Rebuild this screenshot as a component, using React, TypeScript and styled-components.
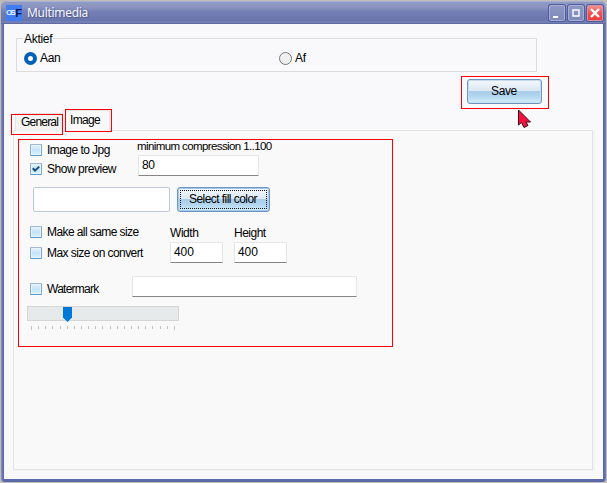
import React from "react";
import styled, { createGlobalStyle } from "styled-components";

const Global = createGlobalStyle`
  * { box-sizing: border-box; }
  body { margin: 0; background: #bdbcb9; overflow: hidden; }
`;

const Frame = styled.div`
  position: relative;
  display: flex;
  flex-direction: column;
  width: 605px;
  height: 481px;
  margin: 1px 0 0 1px;
  padding: 0 3px 3px;
  border-radius: 6px 6px 4px 4px;
  background: linear-gradient(90deg, #8c98c8 0, #5c69a8 2px, #5c69a8 603px, #7783b5 605px);
  font: 12px/14px "Liberation Sans", Arial, sans-serif;
  color: #000;
`;

const TitleBar = styled.header`
  display: flex;
  align-items: center;
  flex: none;
  height: 23px;
  margin: 0 -3px;
  padding: 0 3px 0 5px;
  border-radius: 6px 6px 0 0;
  border-top: 1px solid #a9b1d2;
  background: linear-gradient(#8f99c5 0, #8b95c1 5px, #737fb4 10px, #6975ad 19px, #7d88b8 20px, #5661a0 22px);
`;

const Title = styled.h1`
  flex: 1;
  margin: -1px 0 0 5px;
  font: 12px/16px "Noto Sans", sans-serif;
  letter-spacing: -0.3px;
  color: #f6f7fb;
  text-shadow: 1px 1px 1px #4b5689;
`;

const CaptionButton = styled.span<{ $close?: boolean }>`
  display: grid;
  place-items: center;
  width: 16px;
  height: 16px;
  margin-left: 3px;
  border-radius: 2px;
  border: 1px solid ${(p) => (p.$close ? "#d98f9f" : "#a5aed4")};
  box-shadow: 0 0 0 1px #505c9b;
  background: ${(p) => (p.$close ? "linear-gradient(#f09090, #f25050 50%, #ee3a3a)" : "linear-gradient(#8c97c4, #7f8aba)")};
`;

const Client = styled.main`
  flex: 1;
  min-height: 0;
  padding: 10px 0 0 7px;
  background: #f9f9fc;
`;

const Text = styled.span<{ $spacing?: number }>`
  display: inline-block;
  white-space: nowrap;
  letter-spacing: ${(p) => p.$spacing ?? -0.3}px;
`;

const Group = styled.fieldset`
  display: flex;
  width: 521px;
  height: 38px;
  margin: 0 0 0 5px;
  padding: 8px 0 0 7px;
  border: 1px solid #dcdcdf;
`;

const Legend = styled.legend`
  height: 9px;
  margin-left: -1px;
  padding: 0 1px;
  line-height: 9px;
`;

const LegendText = styled(Text)`
  line-height: 11px;
`;

const Radio = styled.label`
  display: flex;
  gap: 3px;
  width: 255px;
  height: 14px;
  align-items: center;
`;

const Dot = styled.span<{ $on?: boolean }>`
  width: 13px;
  height: 13px;
  border-radius: 50%;
  border: ${(p) => (p.$on ? "4px solid #005fb8" : "1px solid #777")};
  background: ${(p) => (p.$on ? "#fff" : "#f0f0f0")};
`;

const SaveBox = styled.div`
  position: relative;
  width: 88px;
  height: 33px;
  margin: 4px 0 0 450px;
  padding: 2px 5px;
  border: 1px solid #fd0004;
`;

const Button = styled.button<{ $w: number; $h: number; $focus?: boolean }>`
  display: grid;
  place-items: center;
  width: ${(p) => p.$w}px;
  height: ${(p) => p.$h}px;
  padding: ${(p) => (p.$focus ? "0 1px 2px 0" : "0 1px 1px 0")};
  font: inherit;
  color: #000;
  border: 1px solid #6c94c4;
  border-radius: 3px;
  outline: ${(p) => (p.$focus ? "1px dotted #111" : "none")};
  outline-offset: -4px;
  box-shadow: inset 0 0 0 1px ${(p) => (p.$focus ? "#a6c8ea" : "#c8dcef")};
  background: linear-gradient(#f4f8fc 0, #dce8f4 46%, #aacce8 50%, #b2d6ef 72%, #d5f0fa 100%);
`;

const Cursor = styled.svg`
  position: absolute;
  left: 55px;
  top: 32px;
`;

const Tabs = styled.div`
  position: relative;
  z-index: 1;
  display: flex;
  align-items: flex-end;
  height: 22px;
  margin-left: 4px;
`;

const Tab = styled.div<{ $on?: boolean }>`
  position: relative;
  width: ${(p) => (p.$on ? 48 : 47)}px;
  height: ${(p) => (p.$on ? 21 : 18)}px;
  padding: ${(p) => (p.$on ? "2px 0 0 7px" : "1px 0 0 5px")};
  border: 1px solid #e3e3e6;
  border-bottom: 0;
  background: ${(p) => (p.$on ? "#f9f9f9" : "#f1f3f1")};
`;

const Mark = styled.span<{ $x: number; $y: number; $w: number; $h: number }>`
  position: absolute;
  z-index: 2;
  left: ${(p) => p.$x}px;
  top: ${(p) => p.$y}px;
  width: ${(p) => p.$w}px;
  height: ${(p) => p.$h}px;
  border: 1px solid #fd0004;
`;

const Page = styled.section`
  width: 580px;
  height: 340px;
  margin: -1px 0 0 2px;
  padding: 8px 0 0 4px;
  border: 1px solid #e3e3e3;
  box-shadow: 2px 1px 0 #f3f3f5;
  background: #f9f9f9;
`;

const Settings = styled.div`
  width: 375px;
  height: 208px;
  border: 1px solid #fd0004;
`;

const Row = styled.div<{ $h: number; $left?: number }>`
  display: flex;
  height: ${(p) => p.$h}px;
  padding-left: ${(p) => p.$left ?? 11}px;
`;

const Column = styled.div<{ $w: number; $top?: number; $gap?: number }>`
  display: flex;
  flex-direction: column;
  flex: none;
  gap: ${(p) => p.$gap ?? 0}px;
  width: ${(p) => p.$w}px;
  padding-top: ${(p) => p.$top ?? 0}px;
`;

const Caption = styled(Text)`
  height: 14px;
  font-size: 11.5px;
  line-height: 12px;
`;

const Check = styled.label`
  display: flex;
  align-items: center;
  gap: 5px;
  height: 12px;
`;

const Box = styled.span`
  display: grid;
  place-items: center;
  flex: none;
  width: 12px;
  height: 12px;
  border: 1px solid;
  border-color: #a0bad5 #7da9d5 #5b9bd0 #88add2;
  border-radius: 1px;
  background: linear-gradient(#e8f1f8, #c4e3f8 50%, #d8f3ff);
  box-shadow: inset 0 0 0 1px #e6f3fb;
`;

const Edit = styled.div<{ $w: number; $inset?: number }>`
  width: ${(p) => p.$w}px;
  height: 21px;
  margin-left: ${(p) => p.$inset ?? 0}px;
  padding: 2px 0 0 3px;
  border: 1px solid #e6e6e6;
  border-bottom-color: #858585;
  border-radius: 1px;
  background: #fff;
`;

const Swatch = styled.div`
  width: 137px;
  height: 25px;
  margin-right: 7px;
  border: 1px solid #bfc8db;
  border-radius: 2px;
  background: #fff;
`;

const Slider = styled.div`
  width: 152px;
  height: 15px;
  padding-left: 35px;
  border: 1px solid #d6d6d6;
  background: #e7eaea;
`;

const Ticks = styled.div`
  display: flex;
  justify-content: space-between;
  width: 144px;
  margin: 5px 0 0 12px;
`;

const Tick = styled.i`
  width: 1px;
  height: 3px;
  background: #c3c3c3;
  &:first-child, &:last-child { height: 4px; }
`;

const CheckOption = ({ label, on, spacing }: { label: string; on?: boolean; spacing?: number }) => (
  <Check>
    <Box>
      {on && (
        <svg width="10" height="10" viewBox="0 0 10 10">
          <path d="M1.8 4.2 4 6.6 8.2 2.6" fill="none" stroke="#174a7c" strokeWidth="2" />
        </svg>
      )}
    </Box>
    <Text $spacing={spacing}>{label}</Text>
  </Check>
);

const AppIcon = styled.span`
  display: flex;
  align-items: center;
  justify-content: center;
  width: 16px;
  height: 16px;
  background: #3f7df0;
  color: #e6f4ff;
  font: bold 8px/16px "Liberation Sans", sans-serif;
  letter-spacing: -1.6px;
`;

const IconInitial = styled.b`
  margin-left: 1px;
  font-size: 11px;
  letter-spacing: 0;
  color: #07144e;
`;

export default function App() {
  return (
    <>
      <Global />
      <Frame>
        <TitleBar>
          <AppIcon>OS<IconInitial>F</IconInitial></AppIcon>
          <Title>Multimedia</Title>
          <CaptionButton>
            <svg width="14" height="14"><path d="M3 10h5v2H3z" fill="#fff" /></svg>
          </CaptionButton>
          <CaptionButton>
            <svg width="14" height="14"><path d="M4 4v6h6V4z M3.5 4h7" fill="none" stroke="#fff" strokeWidth="1.4" /></svg>
          </CaptionButton>
          <CaptionButton $close>
            <svg width="14" height="14"><path d="m3 3 8 8m0-8-8 8" stroke="#fff" strokeWidth="2.4" /></svg>
          </CaptionButton>
        </TitleBar>
        <Client>
          <Group>
            <Legend><LegendText>Aktief</LegendText></Legend>
            <Radio><Dot $on /><Text>Aan</Text></Radio>
            <Radio><Dot /><Text>Af</Text></Radio>
          </Group>
          <SaveBox>
            <Button $w={75} $h={25}><Text $spacing={-0.4}>Save</Text></Button>
            <Cursor width="16" height="21" viewBox="0 0 16 21">
              <path d="M1.500 1v15l3-2.500 2.500 5 4-2-2-3.500h4.500z" fill="#f5103c" stroke="#3c1018" />
            </Cursor>
          </SaveBox>
          <Tabs>
            <Tab><Text $spacing={-0.8}>General</Text><Mark $x={-5} $y={0} $w={52} $h={21} /></Tab>
            <Tab $on><Text $spacing={-0.65}>Image</Text><Mark $x={2} $y={-2} $w={47} $h={23} /></Tab>
          </Tabs>
          <Page>
            <Settings>
              <Row $h={47}>
                <Column $w={107} $top={4} $gap={7}>
                  <CheckOption label="Image to Jpg" spacing={-0.55} />
                  <CheckOption label="Show preview" on spacing={-0.47} />
                </Column>
                <Column $w={125} $gap={1}>
                  <Caption $spacing={-0.6}>minimum compression 1..100</Caption>
                  <Edit $w={121} $inset={1}><Text>80</Text></Edit>
                </Column>
              </Row>
              <Row $h={39} $left={14}>
                <Swatch />
                <Button $w={93} $h={25} $focus><Text $spacing={-0.55}>Select fill color</Text></Button>
              </Row>
              <Row $h={50}>
                <Column $w={140} $gap={9}>
                  <CheckOption label="Make all same size" spacing={-0.58} />
                  <CheckOption label="Max size on convert" spacing={-0.57} />
                </Column>
                <Column $w={64} $gap={2}>
                  <Text $spacing={-0.45}>Width</Text>
                  <Edit $w={53}><Text $spacing={-0.05}>400</Text></Edit>
                </Column>
                <Column $w={64} $gap={2}>
                  <Text $spacing={-0.5}>Height</Text>
                  <Edit $w={53}><Text $spacing={-0.05}>400</Text></Edit>
                </Column>
              </Row>
              <Row $h={30}>
                <Column $w={102} $top={7}>
                  <CheckOption label="Watermark" spacing={-0.75} />
                </Column>
                <Edit $w={225} />
              </Row>
              <Row $h={15} $left={8}>
                <Slider>
                  <svg width="9" height="15" viewBox="0 0 9 15" overflow="visible">
                    <path d="M0 0h9v10.500L4.500 15 0 10.500z" fill="#0078d7" />
                  </svg>
                </Slider>
              </Row>
              <Ticks>{Array.from({ length: 21 }, (_, i) => <Tick key={i} />)}</Ticks>
            </Settings>
          </Page>
        </Client>
      </Frame>
    </>
  );
}
